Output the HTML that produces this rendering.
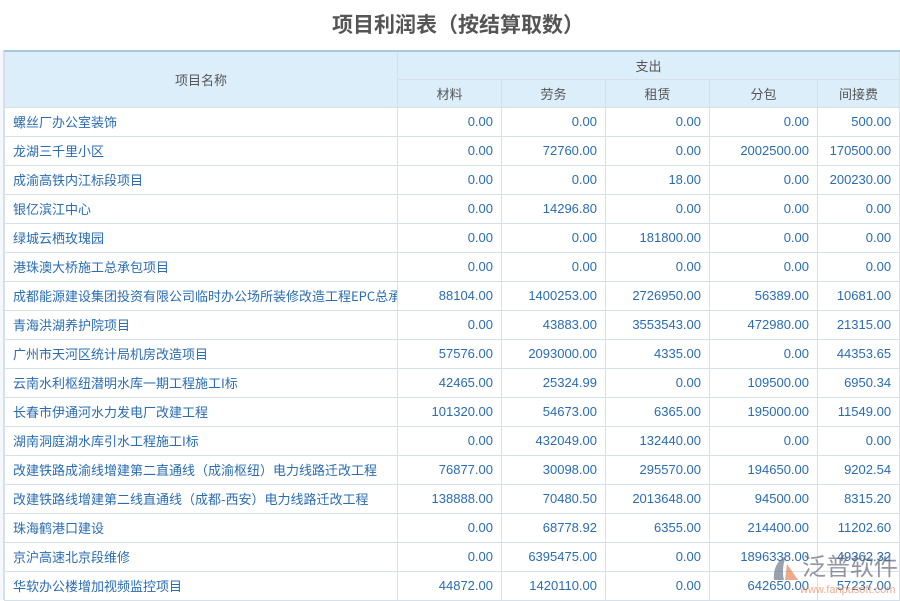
<!DOCTYPE html>
<html><head><meta charset="utf-8"><style>
*{margin:0;padding:0;box-sizing:border-box}
body{width:900px;height:600px;overflow:hidden;background:#fff;font-family:"Liberation Sans","Noto Sans CJK SC",sans-serif;position:relative}
h1{position:absolute;top:9px;left:8px;width:900px;text-align:center;font-size:21px;font-weight:bold;color:#555;font-family:"Noto Sans CJK SC",sans-serif}
table{position:absolute;top:50px;left:4px;border-collapse:collapse;table-layout:fixed;width:895px;font-size:13px}
td,th{border:1px solid #d6e0e8;height:29px;white-space:nowrap;overflow:hidden;color:#2a6cb0;font-weight:normal}
th{background:#ddeefb;color:#555;text-align:center;font-family:"Noto Sans CJK SC",sans-serif;height:28px}
thead tr:first-child th{border-top:2px solid #a9c7dd}
td{text-align:right;padding-right:8px;font-family:"Liberation Sans",sans-serif}
td:first-child{text-align:left;padding-left:8px;font-family:"Noto Sans CJK SC",sans-serif;font-size:13px;text-overflow:clip}
.lb{position:absolute;left:0;top:50px;width:4px;height:550px;border-right:1px solid #d6e0e8;background:#f4f8fc}
.wm{position:absolute;left:802px;top:550px;font-size:24px;line-height:30px;white-space:nowrap;color:rgba(100,105,125,.7);font-family:"Noto Sans CJK SC",sans-serif}
.wm2{position:absolute;left:800px;top:584px;font-size:11px;white-space:nowrap;color:rgba(230,140,100,.7)}
.logo{position:absolute;left:770px;top:554px;width:32px;height:30px}
</style></head><body>
<h1>项目利润表（按结算取数）</h1>
<div class="lb"></div>
<table>
<colgroup><col style="width:393px"><col style="width:104px"><col style="width:104px"><col style="width:104px"><col style="width:108px"><col style="width:82px"></colgroup>
<thead>
<tr><th rowspan="2">项目名称</th><th colspan="5">支出</th></tr>
<tr><th>材料</th><th>劳务</th><th>租赁</th><th>分包</th><th>间接费</th></tr>
</thead>
<tbody>
<tr><td>螺丝厂办公室装饰</td><td>0.00</td><td>0.00</td><td>0.00</td><td>0.00</td><td>500.00</td></tr>
<tr><td>龙湖三千里小区</td><td>0.00</td><td>72760.00</td><td>0.00</td><td>2002500.00</td><td>170500.00</td></tr>
<tr><td>成渝高铁内江标段项目</td><td>0.00</td><td>0.00</td><td>18.00</td><td>0.00</td><td>200230.00</td></tr>
<tr><td>银亿滨江中心</td><td>0.00</td><td>14296.80</td><td>0.00</td><td>0.00</td><td>0.00</td></tr>
<tr><td>绿城云栖玫瑰园</td><td>0.00</td><td>0.00</td><td>181800.00</td><td>0.00</td><td>0.00</td></tr>
<tr><td>港珠澳大桥施工总承包项目</td><td>0.00</td><td>0.00</td><td>0.00</td><td>0.00</td><td>0.00</td></tr>
<tr><td>成都能源建设集团投资有限公司临时办公场所装修改造工程EPC总承包</td><td>88104.00</td><td>1400253.00</td><td>2726950.00</td><td>56389.00</td><td>10681.00</td></tr>
<tr><td>青海洪湖养护院项目</td><td>0.00</td><td>43883.00</td><td>3553543.00</td><td>472980.00</td><td>21315.00</td></tr>
<tr><td>广州市天河区统计局机房改造项目</td><td>57576.00</td><td>2093000.00</td><td>4335.00</td><td>0.00</td><td>44353.65</td></tr>
<tr><td>云南水利枢纽潜明水库一期工程施工I标</td><td>42465.00</td><td>25324.99</td><td>0.00</td><td>109500.00</td><td>6950.34</td></tr>
<tr><td>长春市伊通河水力发电厂改建工程</td><td>101320.00</td><td>54673.00</td><td>6365.00</td><td>195000.00</td><td>11549.00</td></tr>
<tr><td>湖南洞庭湖水库引水工程施工I标</td><td>0.00</td><td>432049.00</td><td>132440.00</td><td>0.00</td><td>0.00</td></tr>
<tr><td>改建铁路成渝线增建第二直通线（成渝枢纽）电力线路迁改工程</td><td>76877.00</td><td>30098.00</td><td>295570.00</td><td>194650.00</td><td>9202.54</td></tr>
<tr><td>改建铁路线增建第二线直通线（成都-西安）电力线路迁改工程</td><td>138888.00</td><td>70480.50</td><td>2013648.00</td><td>94500.00</td><td>8315.20</td></tr>
<tr><td>珠海鹤港口建设</td><td>0.00</td><td>68778.92</td><td>6355.00</td><td>214400.00</td><td>11202.60</td></tr>
<tr><td>京沪高速北京段维修</td><td>0.00</td><td>6395475.00</td><td>0.00</td><td>1896338.00</td><td>49362.32</td></tr>
<tr><td>华软办公楼增加视频监控项目</td><td>44872.00</td><td>1420110.00</td><td>0.00</td><td>642650.00</td><td>57237.00</td></tr>
</tbody></table>
<svg class="logo" viewBox="0 0 32 30"><path d="M16 2 C8 6 3 14 4 26 L14 26 C12 18 13 10 16 2 Z" fill="rgba(110,120,140,.7)"/><path d="M17 10 L28 26 L15 26 Z" fill="rgba(230,140,100,.75)"/></svg>
<div class="wm">泛普软件</div>
<div class="wm2">www.fanpusoft.com</div>
</body></html>
